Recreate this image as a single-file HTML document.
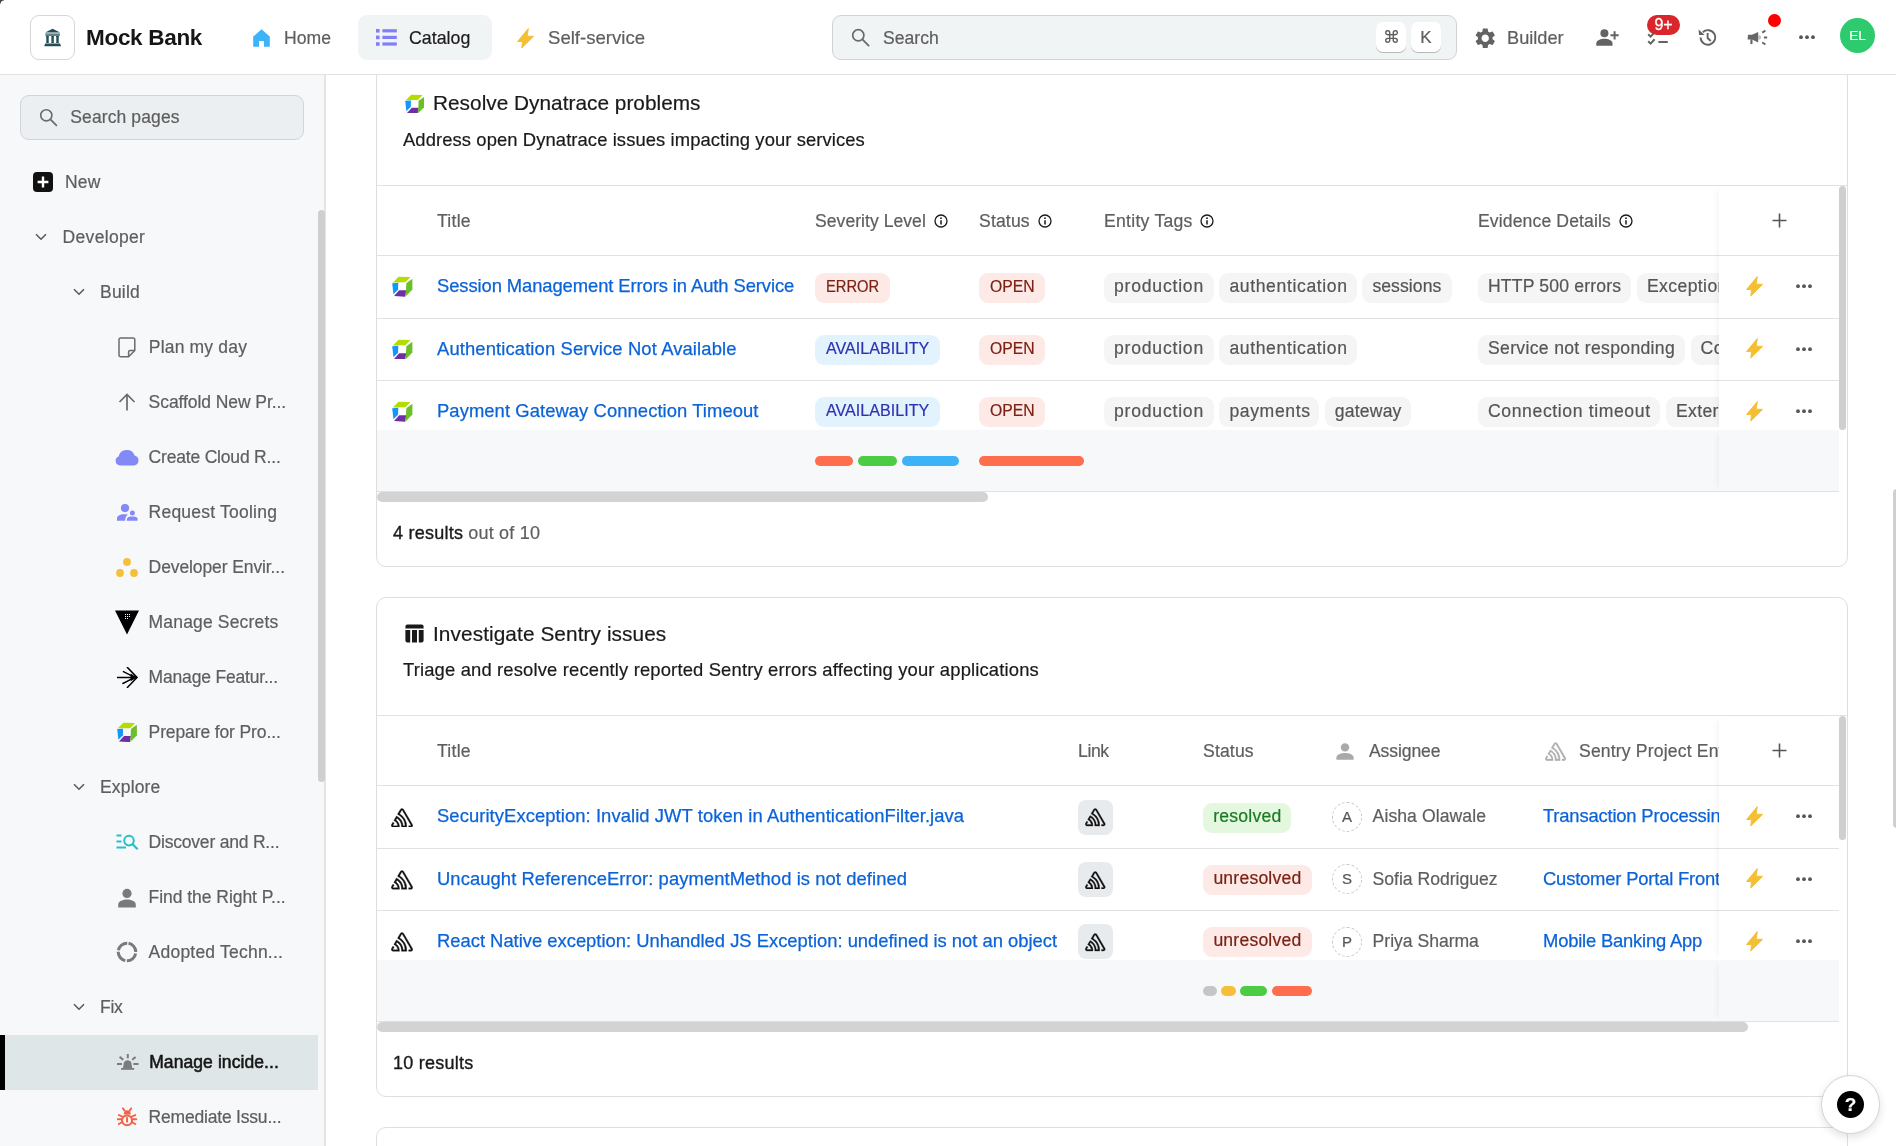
<!DOCTYPE html>
<html><head><meta charset="utf-8">
<style>
*{box-sizing:border-box;margin:0;padding:0}
html,body{width:1896px;height:1146px;overflow:hidden;background:#fff}
body{will-change:transform;-webkit-text-stroke-width:0.2px}
body{position:relative;font-family:"Liberation Sans",sans-serif;color:#5c5c5c;font-size:17.5px}
.a{position:absolute}
.t{position:absolute;white-space:nowrap;line-height:20px}
svg{display:block}
/* header */
#hdr{position:absolute;left:0;top:0;width:1896px;height:75px;background:#fff;border-bottom:1px solid #e2e2e2;z-index:5}
/* sidebar */
#sb{position:absolute;left:0;top:75px;width:326px;height:1071px;background:#f7f8fa;border-right:2px solid #e4e4e4}
.sbt{position:absolute;white-space:nowrap;line-height:20px;font-size:17.5px;color:#5e5e5e}
#main{position:absolute;left:326px;top:75px;width:1570px;height:1071px;overflow:hidden;background:#fff}
</style></head><body>
<div class="a" style="left:0;top:0;width:4px;height:4px;background:radial-gradient(circle at 100% 100%, transparent 3px, #444 4px);z-index:20"></div>
<div id="hdr">
  <div class="a" style="left:30px;top:15px;width:45px;height:45px;border:1px solid #d6d6d6;border-radius:9px"></div>
  <svg class="a" style="left:44px;top:28px" width="18" height="19" viewBox="0 0 18 19"><path d="M1.2 4.6L8.6 0.8L16.1 4.6Z" fill="#234e57"/><rect x="1.2" y="4.9" width="14.9" height="1.1" fill="#9fb3b7"/><rect x="1.4" y="6.3" width="14.5" height="1.4" fill="#234e57"/><path d="M1.9000000000000001 8.1H5.1L4.7 9V14.4L5.1 15.1H1.9000000000000001L2.3000000000000003 14.4V9Z M7.0 8.1H10.2L9.8 9V14.4L10.2 15.1H7.0L7.4 14.4V9Z M11.9 8.1H15.1L14.7 9V14.4L15.1 15.1H11.9L12.299999999999999 14.4V9Z" fill="#234e57"/><path d="M1.2 15.5H16.1L17 18.2H0.2Z" fill="#234e57"/></svg>
  <div class="t" style="left:86px;top:28px;font-size:22.5px;font-weight:bold;color:#161616;letter-spacing:-0.3px;-webkit-text-stroke-width:0">Mock Bank</div>
  <svg class="a" style="left:253px;top:29px" width="17" height="18" viewBox="0 0 17 18"><path d="M8.5 0.3L16.8 7.6V17.8H11V12H6V17.8H0.2V7.6Z" fill="#3db4f7"/></svg>
  <div class="t" style="left:284px;top:28px;color:#5e5e5e;font-size:17.6px">Home</div>
  <div class="a" style="left:358px;top:15px;width:134px;height:45px;background:#f1f4f5;border-radius:9px"></div>
  <svg class="a" style="left:376px;top:29px" width="21" height="17" viewBox="0 0 21 17"><g fill="#7f7ffb"><rect x="0" y="0" width="3.6" height="3.6"/><rect x="0" y="6.6" width="3.6" height="3.6"/><rect x="0" y="13.2" width="3.6" height="3.6"/><rect x="6.4" y="0.2" width="14.4" height="3.2"/><rect x="6.4" y="6.8" width="14.4" height="3.2"/><rect x="6.4" y="13.4" width="14.4" height="3.2"/></g></svg>
  <div class="t" style="left:409px;top:28px;color:#1c1c1c;font-size:17.8px">Catalog</div>
  <svg class="a" style="left:515.5px;top:26.5px" width="20" height="23" viewBox="0 0 20 23"><path d="M12.3 1.6L1.6 14.5L6.6 14.6L5.8 20.9L17.5 9.4L11.1 9.2Z" fill="#f4bf33" stroke="#f4bf33" stroke-width="1" stroke-linejoin="round"/></svg>
  <div class="t" style="left:548px;top:28px;color:#5e5e5e;font-size:18.6px">Self-service</div>
  <div class="a" style="left:832px;top:15px;width:625px;height:45px;background:#f1f4f5;border:1px solid #d0d3d5;border-radius:9px"></div>
  <svg class="a" style="left:851px;top:28px" width="19" height="19" viewBox="0 0 19 19"><circle cx="7.3" cy="7.3" r="5.6" fill="none" stroke="#6a6a6a" stroke-width="1.7"/><path d="M11.4 11.4L17.6 17.6" stroke="#6a6a6a" stroke-width="1.8" stroke-linecap="round"/></svg>
  <div class="t" style="left:883px;top:28px;color:#5e5e5e;font-size:17.6px">Search</div>
  <div class="a" style="left:1376px;top:22px;width:30px;height:30px;background:#fff;border-radius:7px;box-shadow:0 1px 0.5px #b8b8b8"></div>
  <div class="t" style="left:1376px;top:28px;width:30px;text-align:center;color:#5e5e5e;font-size:17px">&#8984;</div>
  <div class="a" style="left:1411px;top:22px;width:30px;height:30px;background:#fff;border-radius:7px;box-shadow:0 1px 0.5px #b8b8b8"></div>
  <div class="t" style="left:1411px;top:28px;width:30px;text-align:center;color:#5e5e5e;font-size:17px">K</div>
  <svg class="a" style="left:1473px;top:25.5px" width="24.5" height="24.5" viewBox="0 0 24 24"><path fill="#636363" d="M19.14 12.94c.04-.3.06-.61.06-.94 0-.32-.02-.64-.07-.94l2.03-1.58a.49.49 0 0 0 .12-.61l-1.92-3.32a.488.488 0 0 0-.59-.22l-2.39.96c-.5-.38-1.03-.7-1.62-.94l-.36-2.54a.484.484 0 0 0-.48-.41h-3.84c-.24 0-.43.17-.47.41l-.36 2.54c-.59.24-1.13.57-1.62.94l-2.39-.96c-.22-.08-.47 0-.59.22L2.74 8.87c-.12.21-.08.47.12.61l2.03 1.58c-.05.3-.09.63-.09.94s.02.64.07.94l-2.03 1.58a.49.49 0 0 0-.12.61l1.92 3.32c.12.22.37.29.59.22l2.39-.96c.5.38 1.03.7 1.62.94l.36 2.54c.05.24.24.41.48.41h3.84c.24 0 .44-.17.47-.41l.36-2.54c.59-.24 1.13-.56 1.62-.94l2.39.96c.22.08.47 0 .59-.22l1.92-3.32c.12-.22.07-.47-.12-.61l-2.01-1.58zM12 15.6c-1.98 0-3.6-1.62-3.6-3.6s1.62-3.6 3.6-3.6 3.6 1.62 3.6 3.6-1.62 3.6-3.6 3.6z"/></svg>
  <div class="t" style="left:1507px;top:28px;color:#5e5e5e;font-size:18.2px">Builder</div>
  <svg class="a" style="left:1596px;top:29px" width="23" height="17" viewBox="0 0 23 17"><circle cx="8.4" cy="4.2" r="4" fill="#636363"/><path d="M0.3 16.8V14.6C0.3 11.2 5 9.8 8.4 9.8S16.5 11.2 16.5 14.6V16.8Z" fill="#636363"/><path d="M18.6 2.2V10.4M14.5 6.3H22.7" stroke="#636363" stroke-width="2"/></svg>
  <svg class="a" style="left:1647px;top:31px" width="22" height="15" viewBox="0 0 22 15"><path d="M1.2 3.3L3.6 5.6L7.6 1.3M1.2 10.3L3.6 12.6L7.6 8.3M11.4 11H20.8" stroke="#636363" stroke-width="2" fill="none"/></svg>
  <div class="a" style="left:1647px;top:15px;width:33px;height:20px;border-radius:10px;background:#d8262b;color:#fff;font-size:16px;line-height:20px;text-align:center;-webkit-text-stroke:0.3px #fff">9+</div>
  <svg class="a" style="left:1698px;top:28px" width="19" height="19" viewBox="0 0 19 19"><path d="M2.6 9.5A7.3 7.3 0 1 0 4.8 4.2" fill="none" stroke="#636363" stroke-width="1.9"/><path d="M0.6 1.5L1 7H6.6Z" fill="#636363"/><path d="M9.6 5V10L12.8 13" fill="none" stroke="#636363" stroke-width="1.9"/></svg>
  <svg class="a" style="left:1747px;top:29px" width="22" height="17" viewBox="0 0 22 17"><path d="M1 5.7H5L11.2 2.9V13.6L5 10.5H0.6Z" fill="#666"/><path d="M11.2 6.2H12.8A1.6 2.2 0 0 1 12.8 10.5H11.2Z" fill="#bdbdbd"/><path d="M3.4 10.2H5.5V15.1H3.4Z" fill="#666"/><path d="M15.2 3.6L18.4 1.6M16.9 8.5H20.2M15.2 13.5L18.4 15.4" stroke="#666" stroke-width="1.9"/></svg>
  <div class="a" style="left:1768px;top:14px;width:12.5px;height:13px;border-radius:50%;background:#ff0000"></div>
  <svg class="a" style="left:1799px;top:35px" width="17" height="5" viewBox="0 0 17 5"><circle cx="2" cy="2.2" r="1.9" fill="#555"/><circle cx="8" cy="2.2" r="1.9" fill="#555"/><circle cx="14" cy="2.2" r="1.9" fill="#555"/></svg>
  <div class="a" style="left:1840px;top:18px;width:35px;height:35px;border-radius:50%;background:#2eca6e;color:#fff;font-size:13.5px;line-height:35px;text-align:center">EL</div>
</div>
<div id="sb">
<div class="a" style="left:20px;top:20px;width:284px;height:45px;background:#ebeff1;border:1px solid #d2d5d8;border-radius:9px"></div>
<svg class="a" style="left:39px;top:33px" width="19" height="19" viewBox="0 0 19 19"><circle cx="7.3" cy="7.3" r="5.6" fill="none" stroke="#6a6a6a" stroke-width="1.6"/><path d="M11.4 11.4L17.4 17.4" stroke="#6a6a6a" stroke-width="1.7" stroke-linecap="round"/></svg>
<div class="sbt" style="left:70.3px;top:31.9px;color:#5e5e5e;letter-spacing:0.109px">Search pages</div>
<svg class="a" style="left:33px;top:97px" width="20" height="20" viewBox="0 0 20 20"><rect x="0" y="0" width="20" height="20" rx="4" fill="#111"/><path d="M10 4.6V15.4M4.6 10H15.4" stroke="#fff" stroke-width="2.4"/></svg>
<div class="sbt" style="left:65.1px;top:96.70000000000002px;font-size:17.5px;letter-spacing:0.142px;">New</div>
<svg class="a" style="left:35px;top:158px" width="12" height="8" viewBox="0 0 12 8"><path d="M1 1.2L6 6.2L11 1.2" fill="none" stroke="#5a5a5a" stroke-width="1.6"/></svg>
<div class="sbt" style="left:62.6px;top:151.70000000000002px;font-size:17.5px;letter-spacing:0.315px;">Developer</div>
<svg class="a" style="left:73px;top:213px" width="12" height="8" viewBox="0 0 12 8"><path d="M1 1.2L6 6.2L11 1.2" fill="none" stroke="#5a5a5a" stroke-width="1.6"/></svg>
<div class="sbt" style="left:100.0px;top:206.70000000000002px;font-size:17.5px;letter-spacing:0.220px;">Build</div>
<svg class="a" style="left:118px;top:262px" width="18" height="21" viewBox="0 0 18 21"><path d="M2.6 1H15.2A1.6 1.6 0 0 1 16.8 2.6V13.4L10.6 19.8H2.6A1.6 1.6 0 0 1 1 18.2V2.6A1.6 1.6 0 0 1 2.6 1Z M16.8 13.4H12.2A1.6 1.6 0 0 0 10.6 15V19.8" fill="none" stroke="#6b6b6b" stroke-width="1.5" stroke-linejoin="round"/></svg>
<div class="sbt" style="left:148.79999999999998px;top:261.7px;font-size:17.5px;letter-spacing:0.180px;">Plan my day</div>
<svg class="a" style="left:118px;top:318px" width="18" height="18" viewBox="0 0 18 18"><path d="M9 17.5V1.5M1.5 9L9 1.5L16.5 9" fill="none" stroke="#6b6b6b" stroke-width="1.7"/></svg>
<div class="sbt" style="left:148.6px;top:316.7px;font-size:17.5px;letter-spacing:-0.069px;">Scaffold New Pr...</div>
<svg class="a" style="left:115px;top:373px" width="24" height="18" viewBox="0 0 24 18"><path d="M5 17.5A4.6 4.6 0 0 1 3.6 8.6A8.4 8.4 0 0 1 19.6 7.4A5.2 5.2 0 0 1 19.4 17.5Z" fill="#8489f8"/></svg>
<div class="sbt" style="left:148.6px;top:371.7px;font-size:17.5px;letter-spacing:-0.188px;">Create Cloud R...</div>
<svg class="a" style="left:116px;top:429px" width="22" height="17" viewBox="0 0 22 17"><circle cx="9" cy="4.1" r="4.1" fill="#8489f8"/><path d="M1 16.7V14.4C1 12 4 10.2 7.6 10.2H11.7L9.6 13.4L9 16.7Z" fill="#8489f8"/><circle cx="16.4" cy="8.9" r="2.5" fill="#8489f8"/><path d="M10.6 16.7L11 14.6C11.6 13.4 13 12.6 14.6 12.6H18C19.6 12.6 21 13.4 21.8 14.6L21.4 16.7Z" fill="#8489f8"/></svg>
<div class="sbt" style="left:148.6px;top:426.7px;font-size:17.5px;letter-spacing:0.221px;">Request Tooling</div>
<svg class="a" style="left:116px;top:483px" width="22" height="20" viewBox="0 0 22 20"><circle cx="11" cy="4" r="3.9" fill="#f5bf39"/><circle cx="4" cy="15" r="3.9" fill="#f5bf39"/><circle cx="18" cy="15" r="3.9" fill="#f5bf39"/></svg>
<div class="sbt" style="left:148.6px;top:481.7px;font-size:17.5px;letter-spacing:-0.101px;">Developer Envir...</div>
<svg class="a" style="left:115px;top:535px" width="24" height="25" viewBox="0 0 24 25"><path d="M0 0.4H24L12 24.6Z" fill="#000"/><g fill="#fff"><rect x="10" y="4" width="1" height="1"/><rect x="12" y="4" width="1" height="1"/><rect x="10" y="6" width="1" height="1"/><rect x="12" y="6" width="1" height="1"/><rect x="10" y="8" width="1" height="1"/><rect x="12" y="8" width="1" height="1"/><rect x="14" y="4" width="1" height="1"/><rect x="14" y="6" width="1" height="1"/></g></svg>
<div class="sbt" style="left:148.6px;top:536.6999999999999px;font-size:17.5px;letter-spacing:0.166px;">Manage Secrets</div>
<svg class="a" style="left:117px;top:592px" width="21" height="21" viewBox="0 0 21 21"><path d="M0.4 10.4H16.5M10.4 0.4L20 10.4L10.4 20.4" fill="none" stroke="#000" stroke-width="1.5" stroke-linecap="round"/><path d="M6.4 4.6Q12.5 7.4 17 10.4Q12.5 13.4 5.8 16.5" fill="none" stroke="#000" stroke-width="1.4" stroke-linecap="round"/><path d="M13.6 6.6L20 10.4L13.6 14.2Z" fill="#000"/></svg>
<div class="sbt" style="left:148.6px;top:591.6999999999999px;font-size:17.5px;letter-spacing:-0.186px;">Manage Featur...</div>
<svg class="a" style="left:117px;top:647px" width="20" height="20" viewBox="0 0 20 20"><path d="M0.8 6.3L6.4 0.7L18 1L13.2 6.2Z" fill="#b4dc00"/><path d="M0.2 7L6.1 6.7L5.9 13.3L1.4 17.8Z" fill="#1496ff"/><path d="M2 19.4L7 14L13.9 14L12.9 20.2Z" fill="#6f2da8"/><path d="M14 7L19.9 2.8L19.9 13.2L13.3 19.9Z" fill="#6bbf28"/></svg>
<div class="sbt" style="left:148.6px;top:646.6999999999999px;font-size:17.5px;letter-spacing:-0.119px;">Prepare for Pro...</div>
<svg class="a" style="left:73px;top:708px" width="12" height="8" viewBox="0 0 12 8"><path d="M1 1.2L6 6.2L11 1.2" fill="none" stroke="#5a5a5a" stroke-width="1.6"/></svg>
<div class="sbt" style="left:100.0px;top:701.6999999999999px;font-size:17.5px;letter-spacing:0.159px;">Explore</div>
<svg class="a" style="left:116px;top:758px" width="23" height="18" viewBox="0 0 23 18"><path d="M0.5 2.5H5.5M0.5 8.5H5.5M0.5 14.5H10" stroke="#24c0cb" stroke-width="1.9"/><circle cx="13" cy="7.6" r="4.8" fill="none" stroke="#24c0cb" stroke-width="2"/><path d="M16.4 11L21.6 16.2" stroke="#24c0cb" stroke-width="2.2"/></svg>
<div class="sbt" style="left:148.6px;top:756.6999999999999px;font-size:17.5px;letter-spacing:-0.207px;">Discover and R...</div>
<svg class="a" style="left:117px;top:813px" width="20" height="20" viewBox="0 0 20 20"><circle cx="10" cy="5.4" r="4.6" fill="#7a7a7a"/><path d="M1.2 19.6V16.6C1.2 13 6.4 11.6 10 11.6S18.8 13 18.8 16.6V19.6Z" fill="#7a7a7a"/></svg>
<div class="sbt" style="left:148.6px;top:811.6999999999999px;font-size:17.5px;letter-spacing:-0.045px;">Find the Right P...</div>
<svg class="a" style="left:116px;top:866px" width="22" height="22" viewBox="0 0 22 22"><circle cx="11" cy="11" r="8.8" fill="none" stroke="#7a7a7a" stroke-width="3" stroke-dasharray="12.2 1.6" transform="rotate(-80 11 11)"/></svg>
<div class="sbt" style="left:148.6px;top:866.6999999999999px;font-size:17.5px;letter-spacing:0.218px;">Adopted Techn...</div>
<svg class="a" style="left:73px;top:928px" width="12" height="8" viewBox="0 0 12 8"><path d="M1 1.2L6 6.2L11 1.2" fill="none" stroke="#5a5a5a" stroke-width="1.6"/></svg>
<div class="sbt" style="left:100.0px;top:921.6999999999999px;font-size:17.5px;letter-spacing:-0.264px;">Fix</div>
<div class="a" style="left:0;top:960px;width:318px;height:55px;background:#dfe6e8"></div>
<div class="a" style="left:0;top:960px;width:5px;height:55px;background:#000"></div>
<svg class="a" style="left:117px;top:978px" width="22" height="18" viewBox="0 0 22 18"><path d="M6 15L6.8 10C7.3 8 9 7.2 10.6 7.2C12.2 7.2 14 8 14.4 10L15.2 15Z" fill="#7b7b7b"/><rect x="4.1" y="15" width="13" height="1.8" fill="#7b7b7b"/><path d="M10.8 0.9V5.3M2.6 3.9L6.3 6.8M18.6 3.9L15.2 6.8M0 10.9H4.9M16.4 10.9H21.5" stroke="#7b7b7b" stroke-width="2"/></svg>
<div class="sbt" style="left:149.2px;top:976.6999999999999px;font-size:17.5px;letter-spacing:0.085px;color:#161616;-webkit-text-stroke:0.55px #161616">Manage incide...</div>
<svg class="a" style="left:117px;top:1032px" width="21" height="20" viewBox="0 0 21 20"><ellipse cx="10.05" cy="13.3" rx="4.95" ry="4.9" fill="none" stroke="#f3614a" stroke-width="2"/><path d="M6.7 7.6C6.7 4.8 8.3 3.3 10.25 3.3C12.2 3.3 13.8 4.8 13.8 7.6Z" fill="#f3614a"/><path d="M6 1.4L7.5 3.6M14.1 1.4L12.8 3.6M5.2 9.5L1.9 8.1M5.1 12.2H0.8M5.2 15L1.9 17M14.9 9.5L18.2 8.1M15 12.2H19.3M14.9 15L18.2 17" stroke="#f3614a" stroke-width="1.9" stroke-linecap="round"/><path d="M10.05 10.2V15.4" stroke="#f3614a" stroke-width="2"/></svg>
<div class="sbt" style="left:148.6px;top:1031.7px;font-size:17.5px;letter-spacing:-0.198px;">Remediate Issu...</div>
<div class="a" style="left:318px;top:135px;width:7px;height:572px;border-radius:3.5px;background:#cfcfcf"></div>
</div>
<div id="main">
<div class="a" style="left:50px;top:-8px;width:1472px;height:500px;border:1px solid #dedede;border-radius:10px;background:#fff"></div>
<svg class="a" style="left:78.80000000000001px;top:18.799999999999997px" width="19.5" height="19.5" viewBox="0 0 20 20"><path d="M0.8 6.3L6.4 0.7L18 1L13.2 6.2Z" fill="#b4dc00"/><path d="M0.2 7L6.1 6.7L5.9 13.3L1.4 17.8Z" fill="#1496ff"/><path d="M2 19.4L7 14L13.9 14L12.9 20.2Z" fill="#6f2da8"/><path d="M14 7L19.9 2.8L19.9 13.2L13.3 19.9Z" fill="#6bbf28"/></svg>
<div class="t" style="left:107px;top:18.28px;font-size:20.8px;color:#1a1a1a;-webkit-text-stroke:0.2px #1a1a1a;letter-spacing:0.019px">Resolve Dynatrace problems</div>
<div class="t" style="left:77px;top:55.44px;font-size:18.4px;color:#1a1a1a;letter-spacing:0.094px">Address open Dynatrace issues impacting your services</div>
<div class="a" style="left:51px;top:110px;width:1470px;height:1px;background:#e2e2e2"></div>
<div class="a" style="left:51px;top:180px;width:1462px;height:1px;background:#e2e2e2"></div>
<div class="a" style="left:51px;top:243px;width:1462px;height:1px;background:#e2e2e2"></div>
<div class="a" style="left:51px;top:305px;width:1462px;height:1px;background:#e2e2e2"></div>
<div class="t" style="left:111px;top:136.36px;font-size:17.6px;color:#5e5e5e;letter-spacing:0.255px">Title</div>
<div class="t" style="left:489px;top:136.36px;font-size:17.6px;color:#5e5e5e;letter-spacing:0.024px">Severity Level</div>
<svg class="a" style="left:608px;top:139px" width="14" height="14" viewBox="0 0 14 14"><circle cx="7" cy="7" r="6" fill="none" stroke="#1a1a1a" stroke-width="1.3"/><circle cx="7" cy="4.2" r="0.9" fill="#1a1a1a"/><path d="M7 6.2V10.4" stroke="#1a1a1a" stroke-width="1.5"/></svg>
<div class="t" style="left:653px;top:136.36px;font-size:17.6px;color:#5e5e5e;letter-spacing:0.145px">Status</div>
<svg class="a" style="left:712px;top:139px" width="14" height="14" viewBox="0 0 14 14"><circle cx="7" cy="7" r="6" fill="none" stroke="#1a1a1a" stroke-width="1.3"/><circle cx="7" cy="4.2" r="0.9" fill="#1a1a1a"/><path d="M7 6.2V10.4" stroke="#1a1a1a" stroke-width="1.5"/></svg>
<div class="t" style="left:778px;top:136.36px;font-size:17.6px;color:#5e5e5e;letter-spacing:0.267px">Entity Tags</div>
<svg class="a" style="left:874px;top:139px" width="14" height="14" viewBox="0 0 14 14"><circle cx="7" cy="7" r="6" fill="none" stroke="#1a1a1a" stroke-width="1.3"/><circle cx="7" cy="4.2" r="0.9" fill="#1a1a1a"/><path d="M7 6.2V10.4" stroke="#1a1a1a" stroke-width="1.5"/></svg>
<div class="t" style="left:1152px;top:136.36px;font-size:17.6px;color:#5e5e5e;letter-spacing:0.119px">Evidence Details</div>
<svg class="a" style="left:1293px;top:139px" width="14" height="14" viewBox="0 0 14 14"><circle cx="7" cy="7" r="6" fill="none" stroke="#1a1a1a" stroke-width="1.3"/><circle cx="7" cy="4.2" r="0.9" fill="#1a1a1a"/><path d="M7 6.2V10.4" stroke="#1a1a1a" stroke-width="1.5"/></svg>
<svg class="a" style="left:66px;top:201.39999999999998px" width="20.5" height="20.5" viewBox="0 0 20 20"><path d="M0.8 6.3L6.4 0.7L18 1L13.2 6.2Z" fill="#b4dc00"/><path d="M0.2 7L6.1 6.7L5.9 13.3L1.4 17.8Z" fill="#1496ff"/><path d="M2 19.4L7 14L13.9 14L12.9 20.2Z" fill="#6f2da8"/><path d="M14 7L19.9 2.8L19.9 13.2L13.3 19.9Z" fill="#6bbf28"/></svg>
<div class="t" style="left:111px;top:201.04px;font-size:18.4px;color:#0b63d8;-webkit-text-stroke:0.25px #0b63d8;letter-spacing:-0.088px">Session Management Errors in Auth Service</div>
<div class="a" style="left:489px;top:197.5px;width:75px;height:30px;border-radius:9px;background:#fde9e6"></div>
<div class="t" style="left:499.9px;top:200.5px;font-size:16.4px;color:#7c2114;line-height:20px;transform:scaleX(0.8984);transform-origin:0 0">ERROR</div>
<div class="a" style="left:653px;top:197.5px;width:66px;height:30px;border-radius:9px;background:#fde9e6"></div>
<div class="t" style="left:663.7px;top:200.5px;font-size:16.4px;color:#7c2114;line-height:20px;transform:scaleX(0.9598);transform-origin:0 0">OPEN</div>
<div class="a" style="left:778px;top:197.5px;width:110px;height:30px;border-radius:9px;background:#f5f5f5"></div>
<div class="t" style="left:788px;top:200.9px;font-size:17.6px;color:#555;letter-spacing:0.784px;line-height:20px">production</div>
<div class="a" style="left:893.4000000000001px;top:197.5px;width:137.6px;height:30px;border-radius:9px;background:#f5f5f5"></div>
<div class="t" style="left:903.4000000000001px;top:200.9px;font-size:17.6px;color:#555;letter-spacing:0.621px;line-height:20px">authentication</div>
<div class="a" style="left:1036.4px;top:197.5px;width:89.4px;height:30px;border-radius:9px;background:#f5f5f5"></div>
<div class="t" style="left:1046.4px;top:200.9px;font-size:17.6px;color:#555;letter-spacing:0.066px;line-height:20px">sessions</div>
<div class="a" style="left:1152px;top:197.5px;width:153.4px;height:30px;border-radius:9px;background:#f5f5f5"></div>
<div class="t" style="left:1162px;top:200.9px;font-size:17.6px;color:#555;letter-spacing:0.165px;line-height:20px">HTTP 500 errors</div>
<div class="a" style="left:1311.0px;top:197.5px;width:130px;height:30px;border-radius:9px;background:#f5f5f5"></div>
<div class="t" style="left:1321.0px;top:200.9px;font-size:17.6px;color:#555;letter-spacing:0.386px;line-height:20px">Exception</div>
<svg class="a" style="left:66px;top:263.7px" width="20.5" height="20.5" viewBox="0 0 20 20"><path d="M0.8 6.3L6.4 0.7L18 1L13.2 6.2Z" fill="#b4dc00"/><path d="M0.2 7L6.1 6.7L5.9 13.3L1.4 17.8Z" fill="#1496ff"/><path d="M2 19.4L7 14L13.9 14L12.9 20.2Z" fill="#6f2da8"/><path d="M14 7L19.9 2.8L19.9 13.2L13.3 19.9Z" fill="#6bbf28"/></svg>
<div class="t" style="left:111px;top:264.04px;font-size:18.4px;color:#0b63d8;-webkit-text-stroke:0.25px #0b63d8;letter-spacing:0.123px">Authentication Service Not Available</div>
<div class="a" style="left:489px;top:259.8px;width:124.6px;height:30px;border-radius:9px;background:#e2f3fd"></div>
<div class="t" style="left:499.7px;top:262.8px;font-size:16.4px;color:#2f32b0;line-height:20px;transform:scaleX(0.9823);transform-origin:0 0">AVAILABILITY</div>
<div class="a" style="left:653px;top:259.8px;width:66px;height:30px;border-radius:9px;background:#fde9e6"></div>
<div class="t" style="left:663.7px;top:262.8px;font-size:16.4px;color:#7c2114;line-height:20px;transform:scaleX(0.9598);transform-origin:0 0">OPEN</div>
<div class="a" style="left:778px;top:259.8px;width:110px;height:30px;border-radius:9px;background:#f5f5f5"></div>
<div class="t" style="left:788px;top:263.2px;font-size:17.6px;color:#555;letter-spacing:0.784px;line-height:20px">production</div>
<div class="a" style="left:893.4000000000001px;top:259.8px;width:137.6px;height:30px;border-radius:9px;background:#f5f5f5"></div>
<div class="t" style="left:903.4000000000001px;top:263.2px;font-size:17.6px;color:#555;letter-spacing:0.621px;line-height:20px">authentication</div>
<div class="a" style="left:1152px;top:259.8px;width:207px;height:30px;border-radius:9px;background:#f5f5f5"></div>
<div class="t" style="left:1162px;top:263.2px;font-size:17.6px;color:#555;letter-spacing:0.323px;line-height:20px">Service not responding</div>
<div class="a" style="left:1364.6px;top:259.8px;width:130px;height:30px;border-radius:9px;background:#f5f5f5"></div>
<div class="t" style="left:1374.6px;top:263.2px;font-size:17.6px;color:#555;letter-spacing:0.395px;line-height:20px">Connection</div>
<svg class="a" style="left:66px;top:326.2px" width="20.5" height="20.5" viewBox="0 0 20 20"><path d="M0.8 6.3L6.4 0.7L18 1L13.2 6.2Z" fill="#b4dc00"/><path d="M0.2 7L6.1 6.7L5.9 13.3L1.4 17.8Z" fill="#1496ff"/><path d="M2 19.4L7 14L13.9 14L12.9 20.2Z" fill="#6f2da8"/><path d="M14 7L19.9 2.8L19.9 13.2L13.3 19.9Z" fill="#6bbf28"/></svg>
<div class="t" style="left:111px;top:326.44px;font-size:18.4px;color:#0b63d8;-webkit-text-stroke:0.25px #0b63d8;letter-spacing:0.075px">Payment Gateway Connection Timeout</div>
<div class="a" style="left:489px;top:322.3px;width:124.6px;height:30px;border-radius:9px;background:#e2f3fd"></div>
<div class="t" style="left:499.7px;top:325.3px;font-size:16.4px;color:#2f32b0;line-height:20px;transform:scaleX(0.9823);transform-origin:0 0">AVAILABILITY</div>
<div class="a" style="left:653px;top:322.3px;width:66px;height:30px;border-radius:9px;background:#fde9e6"></div>
<div class="t" style="left:663.7px;top:325.3px;font-size:16.4px;color:#7c2114;line-height:20px;transform:scaleX(0.9598);transform-origin:0 0">OPEN</div>
<div class="a" style="left:778px;top:322.3px;width:110px;height:30px;border-radius:9px;background:#f5f5f5"></div>
<div class="t" style="left:788px;top:325.7px;font-size:17.6px;color:#555;letter-spacing:0.784px;line-height:20px">production</div>
<div class="a" style="left:893.4000000000001px;top:322.3px;width:100px;height:30px;border-radius:9px;background:#f5f5f5"></div>
<div class="t" style="left:903.4000000000001px;top:325.7px;font-size:17.6px;color:#555;letter-spacing:0.619px;line-height:20px">payments</div>
<div class="a" style="left:998.8000000000002px;top:322.3px;width:86.4px;height:30px;border-radius:9px;background:#f5f5f5"></div>
<div class="t" style="left:1008.8000000000002px;top:325.7px;font-size:17.6px;color:#555;letter-spacing:0.181px;line-height:20px">gateway</div>
<div class="a" style="left:1152px;top:322.3px;width:182.3px;height:30px;border-radius:9px;background:#f5f5f5"></div>
<div class="t" style="left:1162px;top:325.7px;font-size:17.6px;color:#555;letter-spacing:0.614px;line-height:20px">Connection timeout</div>
<div class="a" style="left:1339.9px;top:322.3px;width:130px;height:30px;border-radius:9px;background:#f5f5f5"></div>
<div class="t" style="left:1349.9px;top:325.7px;font-size:17.6px;color:#555;letter-spacing:0.369px;line-height:20px">External</div>
<div class="a" style="left:51px;top:355px;width:1462px;height:62px;background:#f7f8fa;border-bottom:1px solid #e2e2e2"></div>
<div class="a" style="left:489px;top:380.5px;width:38px;height:10px;border-radius:5px;background:#ff6d4f"></div>
<div class="a" style="left:532px;top:380.5px;width:39px;height:10px;border-radius:5px;background:#4ccc45"></div>
<div class="a" style="left:576px;top:380.5px;width:57px;height:10px;border-radius:5px;background:#3db2f6"></div>
<div class="a" style="left:653px;top:380.5px;width:105px;height:10px;border-radius:5px;background:#ff6d4f"></div>
<div class="a" style="left:1393px;top:111px;width:120px;height:244px;background:#fff;box-shadow:-5px 0 6px -4px rgba(0,0,0,0.06)"></div>
<div class="a" style="left:1393px;top:355px;width:120px;height:62px;background:#f7f8fa;border-bottom:1px solid #e2e2e2;box-shadow:-5px 0 6px -4px rgba(0,0,0,0.06)"></div>
<div class="a" style="left:1393px;top:180px;width:120px;height:1px;background:#e2e2e2"></div>
<div class="a" style="left:1393px;top:243px;width:120px;height:1px;background:#e2e2e2"></div>
<div class="a" style="left:1393px;top:305px;width:120px;height:1px;background:#e2e2e2"></div>
<svg class="a" style="left:1446px;top:138px" width="15" height="15" viewBox="0 0 15 15"><path d="M7.5 0.5V14.5M0.5 7.5H14.5" stroke="#555" stroke-width="1.6"/></svg>
<svg class="a" style="left:1419px;top:200px" width="20" height="23" viewBox="0 0 20 23"><path d="M12.3 1.6L1.6 14.5L6.6 14.6L5.8 20.9L17.5 9.4L11.1 9.2Z" fill="#f4bf33" stroke="#f4bf33" stroke-width="1" stroke-linejoin="round"/></svg>
<svg class="a" style="left:1470px;top:209.2px" width="17" height="5" viewBox="0 0 17 5"><circle cx="2" cy="2.2" r="1.9" fill="#555"/><circle cx="8" cy="2.2" r="1.9" fill="#555"/><circle cx="14" cy="2.2" r="1.9" fill="#555"/></svg>
<svg class="a" style="left:1419px;top:262.3px" width="20" height="23" viewBox="0 0 20 23"><path d="M12.3 1.6L1.6 14.5L6.6 14.6L5.8 20.9L17.5 9.4L11.1 9.2Z" fill="#f4bf33" stroke="#f4bf33" stroke-width="1" stroke-linejoin="round"/></svg>
<svg class="a" style="left:1470px;top:271.5px" width="17" height="5" viewBox="0 0 17 5"><circle cx="2" cy="2.2" r="1.9" fill="#555"/><circle cx="8" cy="2.2" r="1.9" fill="#555"/><circle cx="14" cy="2.2" r="1.9" fill="#555"/></svg>
<svg class="a" style="left:1419px;top:324.8px" width="20" height="23" viewBox="0 0 20 23"><path d="M12.3 1.6L1.6 14.5L6.6 14.6L5.8 20.9L17.5 9.4L11.1 9.2Z" fill="#f4bf33" stroke="#f4bf33" stroke-width="1" stroke-linejoin="round"/></svg>
<svg class="a" style="left:1470px;top:334.0px" width="17" height="5" viewBox="0 0 17 5"><circle cx="2" cy="2.2" r="1.9" fill="#555"/><circle cx="8" cy="2.2" r="1.9" fill="#555"/><circle cx="14" cy="2.2" r="1.9" fill="#555"/></svg>
<div class="a" style="left:1513px;top:111px;width:7px;height:244px;border-radius:3.5px;background:#cfcfcf"></div>
<div class="a" style="left:51px;top:417px;width:611px;height:10px;border-radius:5px;background:#d3d3d3"></div>
<div class="t" style="left:67px;top:447.50px;font-size:18px;color:#5e5e5e"><span style="color:#1a1a1a;-webkit-text-stroke:0.35px #1a1a1a;letter-spacing:0.25px">4 results</span> <span style="letter-spacing:0.2px">out of 10</span></div>
<div class="a" style="left:50px;top:522px;width:1472px;height:500px;border:1px solid #dedede;border-radius:10px;background:#fff"></div>
<svg class="a" style="left:79px;top:549px" width="19" height="19" viewBox="0 0 19 19"><path d="M2.4 0.6H16.6A2 2 0 0 1 18.6 2.6V4.4H0.4V2.6A2 2 0 0 1 2.4 0.6Z M0.4 6H5.2V18.4H2.4A2 2 0 0 1 0.4 16.4Z M7 6H12V18.4H7Z M13.8 6H18.6V16.4A2 2 0 0 1 16.6 18.4H13.8Z" fill="#1a1a1a"/></svg>
<div class="t" style="left:107px;top:548.58px;font-size:20.8px;color:#1a1a1a;-webkit-text-stroke:0.2px #1a1a1a;letter-spacing:0.086px">Investigate Sentry issues</div>
<div class="t" style="left:77px;top:585.44px;font-size:18.4px;color:#1a1a1a;letter-spacing:0.158px">Triage and resolve recently reported Sentry errors affecting your applications</div>
<div class="a" style="left:51px;top:640px;width:1470px;height:1px;background:#e2e2e2"></div>
<div class="a" style="left:51px;top:710px;width:1462px;height:1px;background:#e2e2e2"></div>
<div class="a" style="left:51px;top:773px;width:1462px;height:1px;background:#e2e2e2"></div>
<div class="a" style="left:51px;top:835px;width:1462px;height:1px;background:#e2e2e2"></div>
<div class="t" style="left:111px;top:666.36px;font-size:17.6px;color:#5e5e5e;letter-spacing:0.255px">Title</div>
<div class="t" style="left:752px;top:666.36px;font-size:17.6px;color:#5e5e5e;letter-spacing:-0.389px">Link</div>
<div class="t" style="left:877px;top:666.36px;font-size:17.6px;color:#5e5e5e;letter-spacing:0.145px">Status</div>
<svg class="a" style="left:1010px;top:668px" width="18" height="17" viewBox="0 0 18 17"><circle cx="9" cy="4.4" r="4.2" fill="#a9a9a9"/><path d="M0.4 16.8V14.6C0.4 11.4 5.4 10 9 10S17.6 11.4 17.6 14.6V16.8Z" fill="#a9a9a9"/></svg>
<div class="t" style="left:1043px;top:666.36px;font-size:17.6px;color:#5e5e5e;letter-spacing:-0.123px">Assignee</div>
<svg class="a" style="left:1219.2px;top:667px" width="21.2" height="19.080000000000002" viewBox="-0.3 1.2 24.6 21.6"><path d="M13.91 2.505c-.873-1.448-2.972-1.448-3.844 0L6.904 7.92a15.478 15.478 0 0 1 8.53 12.811h-2.221A13.301 13.301 0 0 0 5.784 9.814l-2.926 5.06a7.65 7.65 0 0 1 4.435 5.848H2.194a.365.365 0 0 1-.298-.534l1.413-2.402a5.16 5.16 0 0 0-1.614-.913L.296 19.275a2.182 2.182 0 0 0 .812 2.999 2.24 2.24 0 0 0 1.086.288h6.983a9.322 9.322 0 0 0-3.845-8.318l1.11-1.922a11.47 11.47 0 0 1 4.95 10.24h5.915a17.242 17.242 0 0 0-7.885-15.28l2.244-3.845a.37.37 0 0 1 .504-.13c.255.14 9.75 16.708 9.928 16.9a.365.365 0 0 1-.327.543h-2.287c.029.612.029 1.223 0 1.831h2.297a2.206 2.206 0 0 0 1.922-3.31z" fill="#b0b0b0" stroke="#b0b0b0" stroke-width="0.35"/></svg>
<div class="t" style="left:1253px;top:666.36px;font-size:17.6px;color:#5e5e5e;letter-spacing:0.159px">Sentry Project Entity</div>
<svg class="a" style="left:65px;top:732.6px" width="22" height="19.8" viewBox="-0.3 1.2 24.6 21.6"><path d="M13.91 2.505c-.873-1.448-2.972-1.448-3.844 0L6.904 7.92a15.478 15.478 0 0 1 8.53 12.811h-2.221A13.301 13.301 0 0 0 5.784 9.814l-2.926 5.06a7.65 7.65 0 0 1 4.435 5.848H2.194a.365.365 0 0 1-.298-.534l1.413-2.402a5.16 5.16 0 0 0-1.614-.913L.296 19.275a2.182 2.182 0 0 0 .812 2.999 2.24 2.24 0 0 0 1.086.288h6.983a9.322 9.322 0 0 0-3.845-8.318l1.11-1.922a11.47 11.47 0 0 1 4.95 10.24h5.915a17.242 17.242 0 0 0-7.885-15.28l2.244-3.845a.37.37 0 0 1 .504-.13c.255.14 9.75 16.708 9.928 16.9a.365.365 0 0 1-.327.543h-2.287c.029.612.029 1.223 0 1.831h2.297a2.206 2.206 0 0 0 1.922-3.31z" fill="#111" stroke="#111" stroke-width="0.35"/></svg>
<div class="t" style="left:111px;top:731.04px;font-size:18.4px;color:#0b63d8;-webkit-text-stroke:0.25px #0b63d8;letter-spacing:0.079px">SecurityException: Invalid JWT token in AuthenticationFilter.java</div>
<div class="a" style="left:752px;top:724.5px;width:35px;height:35px;border-radius:8px;background:#e7ebee"></div>
<svg class="a" style="left:759px;top:733.4px" width="20.5" height="18.45" viewBox="-0.3 1.2 24.6 21.6"><path d="M13.91 2.505c-.873-1.448-2.972-1.448-3.844 0L6.904 7.92a15.478 15.478 0 0 1 8.53 12.811h-2.221A13.301 13.301 0 0 0 5.784 9.814l-2.926 5.06a7.65 7.65 0 0 1 4.435 5.848H2.194a.365.365 0 0 1-.298-.534l1.413-2.402a5.16 5.16 0 0 0-1.614-.913L.296 19.275a2.182 2.182 0 0 0 .812 2.999 2.24 2.24 0 0 0 1.086.288h6.983a9.322 9.322 0 0 0-3.845-8.318l1.11-1.922a11.47 11.47 0 0 1 4.95 10.24h5.915a17.242 17.242 0 0 0-7.885-15.28l2.244-3.845a.37.37 0 0 1 .504-.13c.255.14 9.75 16.708 9.928 16.9a.365.365 0 0 1-.327.543h-2.287c.029.612.029 1.223 0 1.831h2.297a2.206 2.206 0 0 0 1.922-3.31z" fill="#111" stroke="#111" stroke-width="0.35"/></svg>
<div class="a" style="left:877px;top:727.5px;width:88.4px;height:30px;border-radius:9px;background:#e3f8df"></div>
<div class="t" style="left:887.2px;top:730.5px;font-size:17.6px;color:#1a7a22;letter-spacing:0.217px;line-height:20px">resolved</div>
<div class="a" style="left:1006px;top:727px;width:30px;height:30px;border-radius:50%;border:1px dashed #c8c8c8;color:#555;font-size:15px;line-height:28px;text-align:center">A</div>
<div class="t" style="left:1046.6px;top:730.76px;font-size:17.6px;color:#5e5e5e;letter-spacing:0.072px">Aisha Olawale</div>
<div class="t" style="left:1217px;top:731.04px;font-size:18.4px;color:#0b63d8;-webkit-text-stroke:0.25px #0b63d8;letter-spacing:-0.180px">Transaction Processing Service</div>
<svg class="a" style="left:65px;top:794.9px" width="22" height="19.8" viewBox="-0.3 1.2 24.6 21.6"><path d="M13.91 2.505c-.873-1.448-2.972-1.448-3.844 0L6.904 7.92a15.478 15.478 0 0 1 8.53 12.811h-2.221A13.301 13.301 0 0 0 5.784 9.814l-2.926 5.06a7.65 7.65 0 0 1 4.435 5.848H2.194a.365.365 0 0 1-.298-.534l1.413-2.402a5.16 5.16 0 0 0-1.614-.913L.296 19.275a2.182 2.182 0 0 0 .812 2.999 2.24 2.24 0 0 0 1.086.288h6.983a9.322 9.322 0 0 0-3.845-8.318l1.11-1.922a11.47 11.47 0 0 1 4.95 10.24h5.915a17.242 17.242 0 0 0-7.885-15.28l2.244-3.845a.37.37 0 0 1 .504-.13c.255.14 9.75 16.708 9.928 16.9a.365.365 0 0 1-.327.543h-2.287c.029.612.029 1.223 0 1.831h2.297a2.206 2.206 0 0 0 1.922-3.31z" fill="#111" stroke="#111" stroke-width="0.35"/></svg>
<div class="t" style="left:111px;top:794.04px;font-size:18.4px;color:#0b63d8;-webkit-text-stroke:0.25px #0b63d8;letter-spacing:0.074px">Uncaught ReferenceError: paymentMethod is not defined</div>
<div class="a" style="left:752px;top:786.8px;width:35px;height:35px;border-radius:8px;background:#e7ebee"></div>
<svg class="a" style="left:759px;top:795.6999999999999px" width="20.5" height="18.45" viewBox="-0.3 1.2 24.6 21.6"><path d="M13.91 2.505c-.873-1.448-2.972-1.448-3.844 0L6.904 7.92a15.478 15.478 0 0 1 8.53 12.811h-2.221A13.301 13.301 0 0 0 5.784 9.814l-2.926 5.06a7.65 7.65 0 0 1 4.435 5.848H2.194a.365.365 0 0 1-.298-.534l1.413-2.402a5.16 5.16 0 0 0-1.614-.913L.296 19.275a2.182 2.182 0 0 0 .812 2.999 2.24 2.24 0 0 0 1.086.288h6.983a9.322 9.322 0 0 0-3.845-8.318l1.11-1.922a11.47 11.47 0 0 1 4.95 10.24h5.915a17.242 17.242 0 0 0-7.885-15.28l2.244-3.845a.37.37 0 0 1 .504-.13c.255.14 9.75 16.708 9.928 16.9a.365.365 0 0 1-.327.543h-2.287c.029.612.029 1.223 0 1.831h2.297a2.206 2.206 0 0 0 1.922-3.31z" fill="#111" stroke="#111" stroke-width="0.35"/></svg>
<div class="a" style="left:877px;top:789.8px;width:108.6px;height:30px;border-radius:9px;background:#fde9e6"></div>
<div class="t" style="left:887.4px;top:792.8px;font-size:17.6px;color:#7c2114;letter-spacing:0.195px;line-height:20px">unresolved</div>
<div class="a" style="left:1006px;top:789.3px;width:30px;height:30px;border-radius:50%;border:1px dashed #c8c8c8;color:#555;font-size:15px;line-height:28px;text-align:center">S</div>
<div class="t" style="left:1046.6px;top:793.76px;font-size:17.6px;color:#5e5e5e;letter-spacing:-0.011px">Sofia Rodriguez</div>
<div class="t" style="left:1217px;top:794.04px;font-size:18.4px;color:#0b63d8;-webkit-text-stroke:0.25px #0b63d8;letter-spacing:-0.186px">Customer Portal Frontend</div>
<svg class="a" style="left:65px;top:857.4px" width="22" height="19.8" viewBox="-0.3 1.2 24.6 21.6"><path d="M13.91 2.505c-.873-1.448-2.972-1.448-3.844 0L6.904 7.92a15.478 15.478 0 0 1 8.53 12.811h-2.221A13.301 13.301 0 0 0 5.784 9.814l-2.926 5.06a7.65 7.65 0 0 1 4.435 5.848H2.194a.365.365 0 0 1-.298-.534l1.413-2.402a5.16 5.16 0 0 0-1.614-.913L.296 19.275a2.182 2.182 0 0 0 .812 2.999 2.24 2.24 0 0 0 1.086.288h6.983a9.322 9.322 0 0 0-3.845-8.318l1.11-1.922a11.47 11.47 0 0 1 4.95 10.24h5.915a17.242 17.242 0 0 0-7.885-15.28l2.244-3.845a.37.37 0 0 1 .504-.13c.255.14 9.75 16.708 9.928 16.9a.365.365 0 0 1-.327.543h-2.287c.029.612.029 1.223 0 1.831h2.297a2.206 2.206 0 0 0 1.922-3.31z" fill="#111" stroke="#111" stroke-width="0.35"/></svg>
<div class="t" style="left:111px;top:856.44px;font-size:18.4px;color:#0b63d8;-webkit-text-stroke:0.25px #0b63d8;letter-spacing:-0.007px">React Native exception: Unhandled JS Exception: undefined is not an object</div>
<div class="a" style="left:752px;top:849.3px;width:35px;height:35px;border-radius:8px;background:#e7ebee"></div>
<svg class="a" style="left:759px;top:858.1999999999999px" width="20.5" height="18.45" viewBox="-0.3 1.2 24.6 21.6"><path d="M13.91 2.505c-.873-1.448-2.972-1.448-3.844 0L6.904 7.92a15.478 15.478 0 0 1 8.53 12.811h-2.221A13.301 13.301 0 0 0 5.784 9.814l-2.926 5.06a7.65 7.65 0 0 1 4.435 5.848H2.194a.365.365 0 0 1-.298-.534l1.413-2.402a5.16 5.16 0 0 0-1.614-.913L.296 19.275a2.182 2.182 0 0 0 .812 2.999 2.24 2.24 0 0 0 1.086.288h6.983a9.322 9.322 0 0 0-3.845-8.318l1.11-1.922a11.47 11.47 0 0 1 4.95 10.24h5.915a17.242 17.242 0 0 0-7.885-15.28l2.244-3.845a.37.37 0 0 1 .504-.13c.255.14 9.75 16.708 9.928 16.9a.365.365 0 0 1-.327.543h-2.287c.029.612.029 1.223 0 1.831h2.297a2.206 2.206 0 0 0 1.922-3.31z" fill="#111" stroke="#111" stroke-width="0.35"/></svg>
<div class="a" style="left:877px;top:852.3px;width:108.6px;height:30px;border-radius:9px;background:#fde9e6"></div>
<div class="t" style="left:887.4px;top:855.3px;font-size:17.6px;color:#7c2114;letter-spacing:0.195px;line-height:20px">unresolved</div>
<div class="a" style="left:1006px;top:851.8px;width:30px;height:30px;border-radius:50%;border:1px dashed #c8c8c8;color:#555;font-size:15px;line-height:28px;text-align:center">P</div>
<div class="t" style="left:1046.6px;top:856.16px;font-size:17.6px;color:#5e5e5e;letter-spacing:-0.024px">Priya Sharma</div>
<div class="t" style="left:1217px;top:856.44px;font-size:18.4px;color:#0b63d8;-webkit-text-stroke:0.25px #0b63d8;letter-spacing:-0.194px">Mobile Banking App</div>
<div class="a" style="left:51px;top:885px;width:1462px;height:62px;background:#f7f8fa;border-bottom:1px solid #e2e2e2"></div>
<div class="a" style="left:877px;top:910.5px;width:14px;height:10px;border-radius:5px;background:#c6c6c6"></div>
<div class="a" style="left:895px;top:910.5px;width:15px;height:10px;border-radius:5px;background:#f5bf39"></div>
<div class="a" style="left:914px;top:910.5px;width:27px;height:10px;border-radius:5px;background:#4ccc45"></div>
<div class="a" style="left:946px;top:910.5px;width:40px;height:10px;border-radius:5px;background:#ff6d4f"></div>
<div class="a" style="left:1393px;top:641px;width:120px;height:244px;background:#fff;box-shadow:-5px 0 6px -4px rgba(0,0,0,0.06)"></div>
<div class="a" style="left:1393px;top:885px;width:120px;height:62px;background:#f7f8fa;border-bottom:1px solid #e2e2e2;box-shadow:-5px 0 6px -4px rgba(0,0,0,0.06)"></div>
<div class="a" style="left:1393px;top:710px;width:120px;height:1px;background:#e2e2e2"></div>
<div class="a" style="left:1393px;top:773px;width:120px;height:1px;background:#e2e2e2"></div>
<div class="a" style="left:1393px;top:835px;width:120px;height:1px;background:#e2e2e2"></div>
<svg class="a" style="left:1446px;top:668px" width="15" height="15" viewBox="0 0 15 15"><path d="M7.5 0.5V14.5M0.5 7.5H14.5" stroke="#555" stroke-width="1.6"/></svg>
<svg class="a" style="left:1419px;top:730px" width="20" height="23" viewBox="0 0 20 23"><path d="M12.3 1.6L1.6 14.5L6.6 14.6L5.8 20.9L17.5 9.4L11.1 9.2Z" fill="#f4bf33" stroke="#f4bf33" stroke-width="1" stroke-linejoin="round"/></svg>
<svg class="a" style="left:1470px;top:739.2px" width="17" height="5" viewBox="0 0 17 5"><circle cx="2" cy="2.2" r="1.9" fill="#555"/><circle cx="8" cy="2.2" r="1.9" fill="#555"/><circle cx="14" cy="2.2" r="1.9" fill="#555"/></svg>
<svg class="a" style="left:1419px;top:792.3px" width="20" height="23" viewBox="0 0 20 23"><path d="M12.3 1.6L1.6 14.5L6.6 14.6L5.8 20.9L17.5 9.4L11.1 9.2Z" fill="#f4bf33" stroke="#f4bf33" stroke-width="1" stroke-linejoin="round"/></svg>
<svg class="a" style="left:1470px;top:801.5px" width="17" height="5" viewBox="0 0 17 5"><circle cx="2" cy="2.2" r="1.9" fill="#555"/><circle cx="8" cy="2.2" r="1.9" fill="#555"/><circle cx="14" cy="2.2" r="1.9" fill="#555"/></svg>
<svg class="a" style="left:1419px;top:854.8px" width="20" height="23" viewBox="0 0 20 23"><path d="M12.3 1.6L1.6 14.5L6.6 14.6L5.8 20.9L17.5 9.4L11.1 9.2Z" fill="#f4bf33" stroke="#f4bf33" stroke-width="1" stroke-linejoin="round"/></svg>
<svg class="a" style="left:1470px;top:864.0px" width="17" height="5" viewBox="0 0 17 5"><circle cx="2" cy="2.2" r="1.9" fill="#555"/><circle cx="8" cy="2.2" r="1.9" fill="#555"/><circle cx="14" cy="2.2" r="1.9" fill="#555"/></svg>
<div class="a" style="left:1513px;top:641px;width:7px;height:124px;border-radius:3.5px;background:#cfcfcf"></div>
<div class="a" style="left:51px;top:947px;width:1371px;height:10px;border-radius:5px;background:#d3d3d3"></div>
<div class="t" style="left:67px;top:978.00px;font-size:18px;color:#5e5e5e"><span style="color:#1a1a1a;-webkit-text-stroke:0.35px #1a1a1a;letter-spacing:0.25px">10 results</span></div>
<div class="a" style="left:50px;top:1052px;width:1472px;height:300px;border:1px solid #dedede;border-radius:10px;background:#fff"></div>
</div>
<div class="a" style="left:1893px;top:489px;width:8px;height:339px;border-radius:4px;background:#cfcfcf;z-index:6"></div>
<div class="a" style="left:1820.5px;top:1075px;width:59px;height:59px;border-radius:50%;background:#fff;border:1px solid #d4d4d4;box-shadow:0 3px 8px rgba(0,0,0,0.12);z-index:6"></div>
<div class="a" style="left:1837px;top:1091px;width:27px;height:27px;border-radius:50%;background:#000;color:#fff;font-weight:bold;font-size:19px;line-height:27px;text-align:center;z-index:7">?</div>
</body></html>
